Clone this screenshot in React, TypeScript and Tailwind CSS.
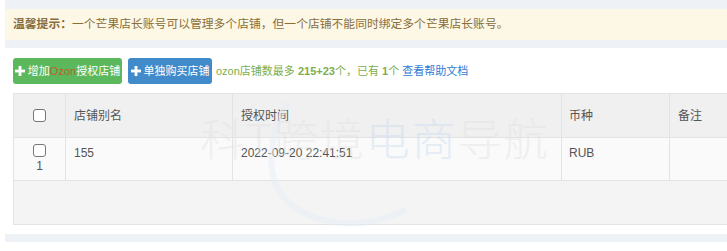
import React from 'react';

const font = { fontFamily: '"Liberation Sans", "Noto Sans CJK SC", sans-serif' };

function Plus() {
  return (
    <svg width="10" height="10" viewBox="0 0 10 10" className="mr-[3px] shrink-0">
      <rect x="3.6" y="0" width="2.8" height="10" fill="#fff" />
      <rect x="0" y="3.6" width="10" height="2.8" fill="#fff" />
    </svg>
  );
}

function Box() {
  return <span className="block h-[13px] w-[13px] rounded-[3px] border border-[#767676] bg-white" />;
}

export default function App() {
  return (
    <div
      className="relative h-[251px] w-[727px] overflow-hidden bg-white text-[12px] text-[#555]"
      style={font}
    >
      <div className="ml-[5px] h-[9px] bg-[#eef1f5]" />
      <div className="ml-[5px] flex h-[31px] items-center bg-[#fcf8e5] pl-[8px] text-[11.8px] text-[#8a6d3b]">
        <span className="font-bold">温馨提示：</span>
        <span>一个芒果店长账号可以管理多个店铺，但一个店铺不能同时绑定多个芒果店长账号。</span>
      </div>
      <div className="ml-[5px] h-[8px] bg-[#eef1f5]" />

      <div className="mt-[10px] flex h-[26px] items-center whitespace-nowrap pl-[13px] text-[11px]">
        <button className="flex h-[26px] w-[109px] items-center justify-center whitespace-nowrap rounded-[3px] bg-[#5cb85c] px-0 text-white">
          <Plus />
          增加<span className="text-[#c9582d]">Ozon</span>授权店铺
        </button>
        <button className="ml-[6px] flex h-[26px] w-[84px] items-center justify-center whitespace-nowrap rounded-[3px] bg-[#428bca] px-0 text-white">
          <Plus />
          单独购买店铺
        </button>
        <span className="ml-[4px] text-[#7cae4f]">
          ozon店铺数最多 <b>215+23</b>个，已有 <b>1</b>个{' '}
          <a className="text-[#2f7ad6]">查看帮助文档</a>
        </span>
      </div>

      <div className="ml-[13px] mt-[9px] w-[760px] border-l border-t border-[#e3e3e3]">
        <div className="flex h-[44px] bg-[#f0f0f0]">
          <div className="flex w-[52px] items-center justify-center border-r border-b border-[#e3e3e3]">
            <Box />
          </div>
          <div className="flex w-[167px] items-center border-r border-b border-[#e3e3e3] pl-[8px]">店铺别名</div>
          <div className="flex w-[329px] items-center border-r border-b border-[#e3e3e3] pl-[8px]">授权时间</div>
          <div className="flex w-[108px] items-center border-r border-b border-[#e3e3e3] pl-[7px]">币种</div>
          <div className="flex flex-1 items-center border-b border-[#e3e3e3] pl-[8px]">备注</div>
        </div>
        <div className="flex h-[43px] bg-[#fafafa]">
          <div className="flex w-[52px] flex-col items-center border-r border-b border-[#e3e3e3] pt-[6px]">
            <Box />
            <span className="mt-[2px] leading-[14px]">1</span>
          </div>
          <div className="w-[167px] border-r border-b border-[#e3e3e3] pl-[8px] pt-[6px]">155</div>
          <div className="w-[329px] border-r border-b border-[#e3e3e3] pl-[8px] pt-[6px]">2022-09-20 22:41:51</div>
          <div className="w-[108px] border-r border-b border-[#e3e3e3] pl-[7px] pt-[6px]">RUB</div>
          <div className="flex-1 border-b border-[#e3e3e3]" />
        </div>
        <div className="h-[44px] border-b border-[#e3e3e3] bg-[#f4f4f4]" />
      </div>

      <div className="ml-[5px] mt-[9px] h-[8px] bg-[#eef1f5]" />

      <div className="pointer-events-none absolute left-[196px] top-[100px] h-[130px] w-[370px]">
        <svg width="370" height="130" viewBox="0 0 370 130" className="absolute left-0 top-0">
          <path
            d="M92 2 C70 40 70 80 90 100 C120 128 170 130 210 110"
            fill="none"
            stroke="#e6edf5"
            strokeWidth="6"
            opacity="0.5"
          />
        </svg>
        <div
          className="absolute left-[4px] top-[12px] whitespace-nowrap text-[44px] leading-[50px] tracking-[2px] text-[#e0e0e0] opacity-40"
          style={{ fontFamily: '"Noto Sans CJK SC", sans-serif', fontWeight: 300 }}
        >
          科T跨境<span className="text-[#c4d8f0]">电商</span>导航
        </div>
      </div>
    </div>
  );
}
